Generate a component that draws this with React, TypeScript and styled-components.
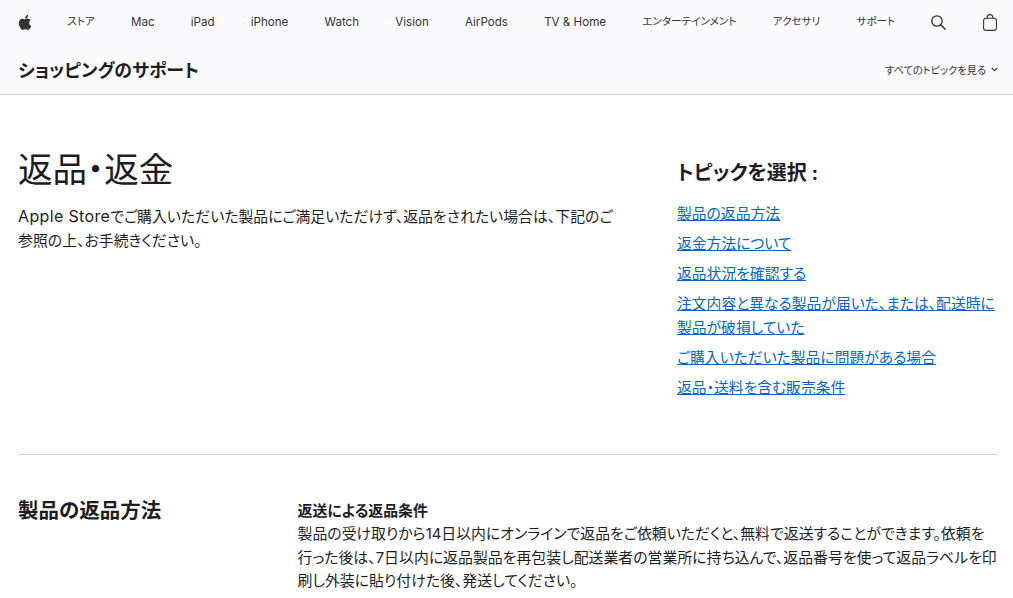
import React from 'react';
import styled, { createGlobalStyle } from 'styled-components';

const sans = `Inter, "Liberation Sans", "Noto Sans CJK JP", sans-serif`;

const GlobalStyle = createGlobalStyle`
  html, body {
    margin: 0;
    padding: 0;
    background: #fff;
    overflow: hidden;
    height: 598px;
  }
  body {
    font-family: ${sans};
    font-feature-settings: "palt";
    color: #1d1d1f;
  }
`;

const GlobalNav = styled.nav`
  height: 44px;
  background: #fbfbfd;
  padding: 0 0 0 18px;
  display: flex;
  align-items: center;
  gap: 36.2px;
`;

// カタカナの項目だけ少し小さい
const NavItem = styled.a<{ $kana?: boolean }>`
  font-size: ${(p) => (p.$kana ? '10.6px' : '11.6px')};
  line-height: 40px;
  color: #333336;
  white-space: nowrap;
`;

const NavIcon = styled.span`
  display: flex;
  align-items: center;
  color: #333336;
`;

const LogoIcon = styled(NavIcon)`
  margin-right: -1px;
`;

const SubNav = styled.div`
  height: 50px;
  background: #fbfbfd;
  border-bottom: 1px solid #d2d2d7;
  padding: 0 15px 0 18px;
  display: flex;
  align-items: center;
  justify-content: space-between;
`;

const SubTitle = styled.div`
  font-size: 17.9px;
  font-weight: 700;
  color: #1d1d1f;
`;

const SubLink = styled.a`
  font-size: 10.2px;
  color: #333336;
  display: flex;
  align-items: center;
  gap: 5px;
`;

const Hero = styled.section`
  margin: 0 15px 0 18px;
  padding: 50px 0 54px;
  border-bottom: 1px solid #d2d2d7;
  display: flex;
  justify-content: space-between;
`;

const Intro = styled.div`
  width: 600px;
`;

const Title = styled.h1`
  margin: 0 0 10px;
  font-size: 34.5px;
  line-height: 50px;
  font-weight: 400;
  color: #1d1d1f;
`;

const Lead = styled.p`
  margin: 0;
  font-size: 14.9px;
  line-height: 24px;
  color: #1d1d1f;
`;

const LatinName = styled.span`
  font-size: 16px;
  line-height: 1;
  letter-spacing: 0.35px;
`;

const Topics = styled.div`
  width: 321px;
  padding-top: 14px;
`;

const TopicsTitle = styled.h2`
  margin: 0 0 15px;
  font-size: 20px;
  line-height: 28px;
  font-weight: 700;
`;

const TopicList = styled.ul`
  margin: 0;
  padding: 0;
  list-style: none;
  display: flex;
  flex-direction: column;
  gap: 6px;
`;

const TopicLink = styled.a`
  font-size: 14.8px;
  line-height: 24px;
  color: #0066cc;
  text-decoration: underline;
`;

const Section = styled.section`
  margin: 0 15px 0 18px;
  padding-top: 31px;
  display: flex;
`;

const SectionTitle = styled.h2`
  margin: 0;
  width: 279.5px;
  flex: none;
  font-size: 20.5px;
  line-height: 50px;
  font-weight: 700;
`;

const SectionBody = styled.div`
  padding-top: 14px;
  width: 700px;
  font-size: 14.9px;
  line-height: 23.3px;
  color: #1d1d1f;
`;

const SectionLabel = styled.div`
  font-weight: 700;
`;

const navItems = [
  { label: 'ストア', kana: true },
  { label: 'Mac' },
  { label: 'iPad' },
  { label: 'iPhone' },
  { label: 'Watch' },
  { label: 'Vision' },
  { label: 'AirPods' },
  { label: 'TV & Home' },
  { label: 'エンターテインメント', kana: true },
  { label: 'アクセサリ', kana: true },
  { label: 'サポート', kana: true },
];

const topics = [
  '製品の返品方法',
  '返金方法について',
  '返品状況を確認する',
  '注文内容と異なる製品が届いた、または、配送時に製品が破損していた',
  'ご購入いただいた製品に問題がある場合',
  '返品・送料を含む販売条件',
];

const AppleLogo = () => (
  <svg width="14" height="17" viewBox="0 0 384 512" fill="#333336">
    <path d="M318.7 268.7c-.2-36.7 16.4-64.4 50-84.8-18.8-26.9-47.2-41.7-84.7-44.6-35.5-2.8-74.3 20.7-88.5 20.7-15 0-49.4-19.7-76.4-19.7C63.3 141.2 4 184.8 4 273.5q0 39.3 14.4 81.2c12.8 36.7 59 126.7 107.2 125.2 25.2-.6 43-17.9 75.8-17.9 31.8 0 48.3 17.9 76.4 17.9 48.6-.7 90.4-82.5 102.6-119.3-65.2-30.7-61.7-90-61.7-91.9zm-56.6-164.2c27.3-32.4 24.8-61.9 24-72.5-24.1 1.4-52 16.4-67.9 34.9-17.5 19.8-27.8 44.3-25.6 71.9 26.1 2 49.9-11.4 69.5-34.3z" />
  </svg>
);

const SearchIcon = () => (
  <svg width="15" height="15" viewBox="0 0 15 15" fill="none" stroke="#333336" strokeWidth="1.3">
    <circle cx="6" cy="6" r="5.2" />
    <path d="M9.8 9.8 14.2 14.2" strokeLinecap="round" strokeWidth="1.5" />
  </svg>
);

const BagIcon = () => (
  <svg width="14" height="17" viewBox="0 0 14 17" fill="none" stroke="#333336" strokeWidth="1.1">
    <rect x="0.6" y="4.2" width="12.8" height="12.2" rx="2.4" />
    <path d="M4.2 4.2V3.4a2.8 2.8 0 0 1 5.6 0v.8" />
  </svg>
);

const Chevron = () => (
  <svg width="7" height="5" viewBox="0 0 7 5" fill="none" stroke="#333336" strokeWidth="1.1">
    <path d="M.7 1 3.5 3.8 6.3 1" />
  </svg>
);

export default function App() {
  return (
    <>
      <GlobalStyle />
      <GlobalNav>
        <LogoIcon><AppleLogo /></LogoIcon>
        {navItems.map((item) => (
          <NavItem key={item.label} $kana={item.kana}>{item.label}</NavItem>
        ))}
        <NavIcon><SearchIcon /></NavIcon>
        <NavIcon><BagIcon /></NavIcon>
      </GlobalNav>
      <SubNav>
        <SubTitle>ショッピングのサポート</SubTitle>
        <SubLink>すべてのトピックを見る <Chevron /></SubLink>
      </SubNav>
      <Hero>
        <Intro>
          <Title>返品・返金</Title>
          <Lead>
            <LatinName>Apple Store</LatinName>でご購入いただいた製品にご満足いただけず、返品をされたい場合は、下記のご参照の上、お手続きください。
          </Lead>
        </Intro>
        <Topics>
          <TopicsTitle>トピックを選択 :</TopicsTitle>
          <TopicList>
            {topics.map((topic) => (
              <li key={topic}>
                <TopicLink>{topic}</TopicLink>
              </li>
            ))}
          </TopicList>
        </Topics>
      </Hero>
      <Section>
        <SectionTitle>製品の返品方法</SectionTitle>
        <SectionBody>
          <SectionLabel>返送による返品条件</SectionLabel>
          製品の受け取りから14日以内にオンラインで返品をご依頼いただくと、無料で返送することができます。依頼を行った後は、7日以内に返品製品を再包装し配送業者の営業所に持ち込んで、返品番号を使って返品ラベルを印刷し外装に貼り付けた後、発送してください。
        </SectionBody>
      </Section>
    </>
  );
}
